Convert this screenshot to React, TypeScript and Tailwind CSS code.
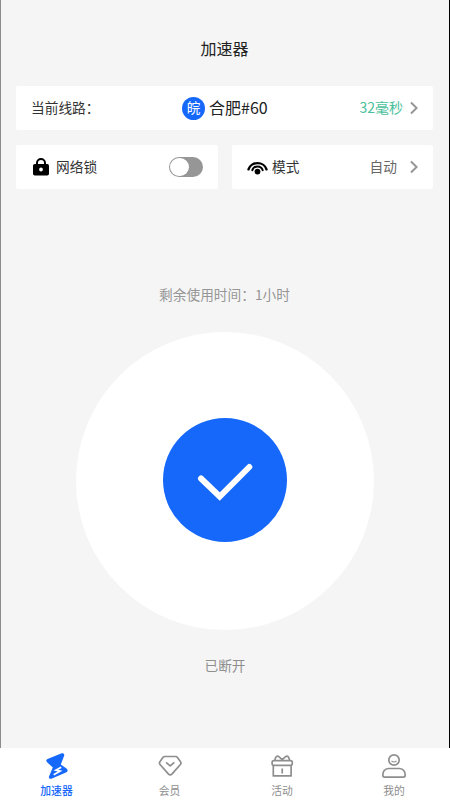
import { useState } from 'react'
import type { ReactNode } from 'react'

type Tab = {
  id: string
  label: string
  icon: ReactNode
}

function Arrow() {
  return (
    <svg width="9" height="14" viewBox="0 0 9 14" fill="none" stroke="#969696" strokeWidth="2">
      <path d="M2 1.5 7.6 7 2 12.5" />
    </svg>
  )
}

function LockIcon() {
  return (
    <svg width="16" height="18" viewBox="0 0 16 18">
      <path d="M4 8V5a4 4 0 0 1 8 0v3" fill="none" stroke="#000" strokeWidth="2" />
      <path
        fillRule="evenodd"
        d="M1.8 6h12.400a1.800 1.800 0 0 1 1.800 1.800v7.900a1.800 1.800 0 0 1-1.800 1.800H1.800a1.800 1.800 0 0 1-1.800-1.800V7.800A1.800 1.800 0 0 1 1.800 6ZM8 9.600a1.900 1.900 0 1 0 0 3.800 1.900 1.900 0 0 0 0-3.800Z"
      />
    </svg>
  )
}

function SignalIcon() {
  return (
    <svg width="21" height="15" viewBox="0 0 21 15" fill="none" stroke="#000" strokeWidth="2.4" strokeLinecap="round">
      <path d="M1.5 9.3a9.3 8.2 0 0 1 18 0" />
      <path d="M5.3 10.2a5.4 5.2 0 0 1 10.400 0" strokeWidth="2" />
      <circle cx="10.5" cy="11.6" r="2.9" fill="#000" stroke="none" />
    </svg>
  )
}

const tabs: Tab[] = [
  {
    id: 'boost',
    label: '加速器',
    icon: (
      <svg width="24" height="28" viewBox="0.8 0 24 28">
        <path
          d="M3.3 7 17.5 1.300Q20.600.600 20 3.600L16.600 12.600 22.600 16.800Q24.300 18.600 22.300 20.200L7.200 26.700Q4.200 27.500 4.800 24.400L8.600 15.500 2.900 10.300Q1 8.200 3.300 7Z"
          fill="#1668fb"
        />
        <path d="m17 15.2-5.3 3 4.2.9-6.4 3.6" fill="none" stroke="#fff" strokeWidth="1.7" />
      </svg>
    ),
  },
  {
    id: 'vip',
    label: '会员',
    icon: (
      <svg
        width="24"
        height="28"
        viewBox="0 0 24 28"
        fill="none"
        stroke="#8e8e8e"
        strokeWidth="1.7"
        strokeLinejoin="round"
        strokeLinecap="round"
      >
        <path d="M7 4.5h10.400q1.300 0 2.100 1l3 4.200q1 1.500-.1 2.800l-8.300 9.400q-1.900 1.800-3.800 0L2 12.500Q.9 11.200 1.900 9.700l3-4.200q.8-1 2.100-1Z" />
        <path d="m8.6 10.8 3.600 3.100 3.600-3.100" />
      </svg>
    ),
  },
  {
    id: 'activity',
    label: '活动',
    icon: (
      <svg width="24" height="28" viewBox="0 0 24 28" fill="none" stroke="#8e8e8e" strokeWidth="1.7" strokeLinejoin="round">
        <rect x="2.1" y="8.6" width="20.2" height="4.8" rx="1.8" />
        <path d="M3.3 13.4v10.500h17.800V13.400M12.200 16.600v4.900" />
        <path d="M4.9 8.4c.3-3.600 2.200-5.200 3.900-3.800l3.400 3 3.400-3c1.700-1.400 3.600.2 3.900 3.800" />
      </svg>
    ),
  },
  {
    id: 'mine',
    label: '我的',
    icon: (
      <svg width="26" height="28" viewBox="0 0 26 28" fill="none" stroke="#8e8e8e" strokeWidth="1.7">
        <circle cx="13" cy="8" r="5.2" />
        <path d="M10.5 9q2.5 2 5 0" strokeWidth="1.2" />
        <path d="M7.5 16.500h11q5.700.5 5.700 6.700 0 1.900-1.900 1.900H3.700q-1.900 0-1.900-1.900 0-6.200 5.700-6.700Z" />
      </svg>
    ),
  },
]

export default function App() {
  const [activeTab, setActiveTab] = useState('boost')
  const [locked, setLocked] = useState(false)

  return (
    <div className="flex h-screen flex-col bg-white font-['Noto_Sans_CJK_SC',sans-serif]">
      <main className="flex min-h-0 flex-1 flex-col items-center border-r border-l border-r-black border-l-[#8c8c8c] bg-[#f5f5f5]">
        <h1 className="mt-9 mr-px text-base leading-6 text-[#222]">加速器</h1>

        <div className="mt-[26px] flex w-full flex-col gap-[15px] px-[15px] text-[13.7px] leading-5">
          <button type="button" className="mr-px flex h-11 items-center rounded-xs bg-white px-[15px]">
            <span className="mb-0.5 w-[151px] text-left text-[#333]">当前线路：</span>
            <span className="flex size-[23px] items-center justify-center rounded-full bg-[#1668fb] pb-0.5 text-[13.5px] text-white">
              皖
            </span>
            <span className="mb-0.5 ml-1 text-base text-[#222]">合肥#60</span>
            <span className="mr-[6px] mb-0.5 ml-auto text-sm text-[#4abf9b]">32毫秒</span>
            <Arrow />
          </button>

          <div className="mr-px flex gap-[14px]">
            <div className="flex h-11 w-[202px] items-center rounded-xs bg-white pr-[15px] pl-[17px]">
              <LockIcon />
              <span className="mb-0.5 ml-[7px] text-[#333]">网络锁</span>
              <button
                type="button"
                role="switch"
                aria-checked={locked}
                aria-label="网络锁"
                onClick={() => setLocked(!locked)}
                className={`ml-auto flex h-5 w-[34px] items-center rounded-full px-px ${
                  locked ? 'justify-end bg-[#1668fb]' : 'justify-start bg-[#969696]'
                }`}
              >
                <span className="h-[18px] w-[19px] rounded-full bg-white" />
              </button>
            </div>
            <button type="button" className="flex h-11 flex-1 items-center rounded-xs bg-white px-[15px]">
              <SignalIcon />
              <span className="mb-0.5 ml-[4px] text-[#333]">模式</span>
              <span className="mr-[12px] mb-0.5 ml-auto text-[#666]">自动</span>
              <Arrow />
            </button>
          </div>
        </div>

        <p className="mt-[95px] mr-px text-[13.7px] leading-5 text-[#969696]">剩余使用时间：1小时</p>

        <div className="mt-7 flex size-[298px] shrink-0 items-center justify-center rounded-full bg-white">
          <button
            type="button"
            aria-label="连接"
            className="mb-[2px] flex size-[124px] items-center justify-center rounded-full bg-[#1668fb]"
          >
            <svg width="56" height="44" viewBox="0 -2 56 44" fill="none" stroke="#fff" strokeWidth="6" strokeLinecap="round">
              <path d="M4 18.5 22.700 36.500 52.300 7" />
            </svg>
          </button>
        </div>

        <p className="mt-[25px] text-[13.7px] leading-5 text-[#8e8e8e]">已断开</p>
      </main>

      <nav className="grid h-[52px] shrink-0 grid-cols-[113px_113px_112px_112px] bg-white">
        {tabs.map((tab) => (
          <button
            key={tab.id}
            type="button"
            onClick={() => setActiveTab(tab.id)}
            className={`flex flex-col items-center pt-1 text-[10.8px] leading-4 ${
              tab.id === activeTab ? 'font-medium text-[#1668fb]' : 'text-[#8e8e8e]'
            }`}
          >
            {tab.icon}
            <span className="mt-[2px]">{tab.label}</span>
          </button>
        ))}
      </nav>
    </div>
  )
}
